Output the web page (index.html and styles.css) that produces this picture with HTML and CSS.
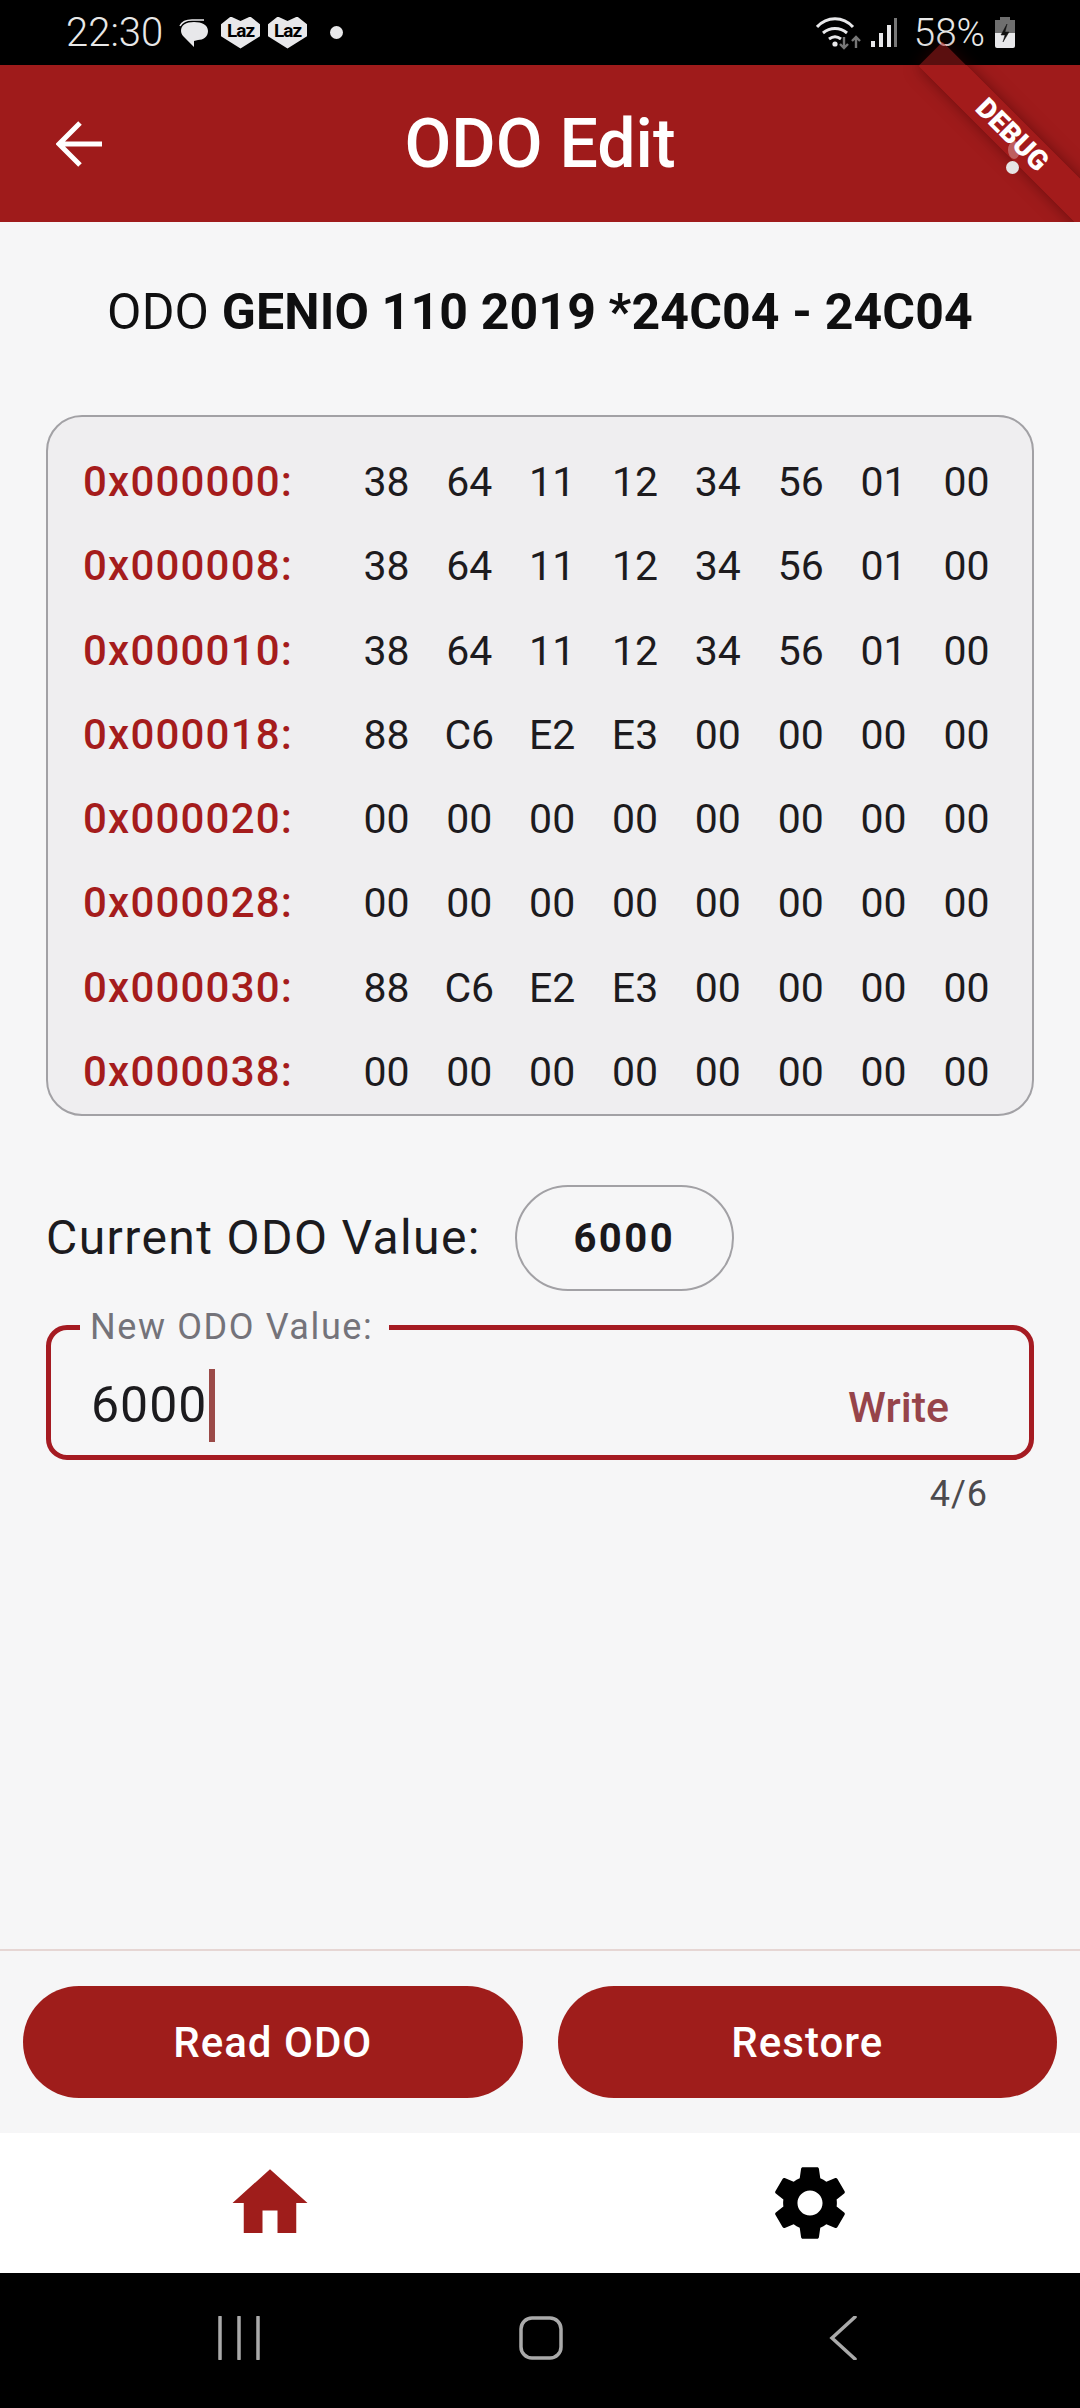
FILE: index.html
```html
<!DOCTYPE html>
<html lang="en">
<head>
<meta charset="utf-8">
<title>ODO Edit</title>
<link rel="stylesheet" href="styles.css">
</head>
<body>
<div class="page">
  <div class="status">
    <div class="status-left">
      <span class="clock">22:30</span>
      <svg class="ic-chat" viewBox="0 0 32 32"><path class="fg" d="M3 14c0-6 5-9 13-9s14 3 14 9-5 9-10 9l-4 1v6l-9-9c-2-2-4-4-4-7z"/><path class="st" d="M2 9c2-4 6-6 12-6h12"/></svg>
      <span class="laz">Laz</span>
      <span class="laz">Laz</span>
      <span class="dot"></span>
    </div>
    <div class="status-right">
      <svg class="ic-wifi" viewBox="0 0 46 34"><path class="wave" d="M1 11C11 0 27 0 37 11M7 17c7-6 17-6 24 0M13 23c4-3 8-3 12 0"/><circle class="fg" cx="19" cy="28" r="2.6"/><path class="arrows" d="M28 21v11M24 28l4 4 4-4M40 32V21M36 25l4-4 4 4"/></svg>
      <svg class="ic-signal" viewBox="0 0 28 32"><rect class="fg" x="1" y="24" width="4" height="6"/><rect class="fg" x="9" y="16" width="4" height="14"/><rect class="fg" x="17" y="8" width="4" height="22"/><rect class="dim" x="24" y="1" width="3" height="29"/></svg>
      <span class="pct">58%</span>
      <svg class="ic-batt" viewBox="0 0 22 32"><rect class="dim2" x="6" y="0" width="10" height="4"/><rect class="dim2" x="1" y="3" width="20" height="13"/><path class="fg" d="M1 16h20v13a2 2 0 0 1-2 2H3a2 2 0 0 1-2-2z"/><path class="bolt" d="M13 7l-6 11h4l-2 7 6-10h-4z"/></svg>
    </div>
  </div>

  <header class="appbar">
    <svg class="back" viewBox="0 0 48 48"><path d="M46 24H4M24 3 3 24l21 21"/></svg>
    <h1 class="appbar-title">ODO Edit</h1>
  </header>

  <main class="main">
    <h2 class="heading">ODO <b>GENIO 110 2019 *24C04 - 24C04</b></h2>

    <section class="dump">
      <div class="row"><span class="addr">0x000000:</span><span class="b">38</span><span class="b">64</span><span class="b">11</span><span class="b">12</span><span class="b">34</span><span class="b">56</span><span class="b">01</span><span class="b">00</span></div>
      <div class="row"><span class="addr">0x000008:</span><span class="b">38</span><span class="b">64</span><span class="b">11</span><span class="b">12</span><span class="b">34</span><span class="b">56</span><span class="b">01</span><span class="b">00</span></div>
      <div class="row"><span class="addr">0x000010:</span><span class="b">38</span><span class="b">64</span><span class="b">11</span><span class="b">12</span><span class="b">34</span><span class="b">56</span><span class="b">01</span><span class="b">00</span></div>
      <div class="row"><span class="addr">0x000018:</span><span class="b">88</span><span class="b">C6</span><span class="b">E2</span><span class="b">E3</span><span class="b">00</span><span class="b">00</span><span class="b">00</span><span class="b">00</span></div>
      <div class="row"><span class="addr">0x000020:</span><span class="b">00</span><span class="b">00</span><span class="b">00</span><span class="b">00</span><span class="b">00</span><span class="b">00</span><span class="b">00</span><span class="b">00</span></div>
      <div class="row"><span class="addr">0x000028:</span><span class="b">00</span><span class="b">00</span><span class="b">00</span><span class="b">00</span><span class="b">00</span><span class="b">00</span><span class="b">00</span><span class="b">00</span></div>
      <div class="row"><span class="addr">0x000030:</span><span class="b">88</span><span class="b">C6</span><span class="b">E2</span><span class="b">E3</span><span class="b">00</span><span class="b">00</span><span class="b">00</span><span class="b">00</span></div>
      <div class="row"><span class="addr">0x000038:</span><span class="b">00</span><span class="b">00</span><span class="b">00</span><span class="b">00</span><span class="b">00</span><span class="b">00</span><span class="b">00</span><span class="b">00</span></div>
    </section>

    <div class="current">
      <span class="current-label">Current ODO Value:</span>
      <span class="pill">6000</span>
    </div>

    <fieldset class="field">
      <legend class="field-label">New ODO Value:</legend>
      <div class="field-body">
        <span class="field-value">6000</span><span class="caret"></span>
        <span class="write">Write</span>
      </div>
    </fieldset>
    <div class="counter">4/6</div>
  </main>

  <div class="actions">
    <button class="btn">Read ODO</button>
    <button class="btn">Restore</button>
  </div>

  <nav class="tabs">
    <div class="tab">
      <svg class="home" viewBox="0 0 24 24"><path d="M10 20v-6h4v6h5v-8h3L12 3 2 12h3v8z"/></svg>
    </div>
    <div class="tab">
      <svg class="gear" viewBox="0 0 24 24"><path d="M19.43 12.98c.04-.32.07-.64.07-.98s-.03-.66-.07-.98l2.11-1.65c.19-.15.24-.42.12-.64l-2-3.46c-.12-.22-.39-.3-.61-.22l-2.49 1c-.52-.4-1.08-.73-1.69-.98l-.38-2.65C14.46 2.18 14.25 2 14 2h-4c-.25 0-.46.18-.49.42l-.38 2.65c-.61.25-1.17.59-1.69.98l-2.49-1c-.23-.09-.49 0-.61.22l-2 3.46c-.13.22-.07.49.12.64l2.11 1.65c-.04.32-.07.65-.07.98s.03.66.07.98l-2.11 1.65c-.19.15-.24.42-.12.64l2 3.46c.12.22.39.3.61.22l2.49-1c.52.4 1.08.73 1.69.98l.38 2.65c.03.24.24.42.49.42h4c.25 0 .46-.18.49-.42l.38-2.65c.61-.25 1.17-.59 1.69-.98l2.49 1c.23.09.49 0 .61-.22l2-3.46c.12-.22.07-.49-.12-.64l-2.11-1.65zM12 15.5c-1.93 0-3.5-1.57-3.5-3.5s1.57-3.5 3.5-3.5 3.5 1.57 3.5 3.5-1.57 3.5-3.5 3.5z"/></svg>
    </div>
  </nav>

  <div class="sysnav">
    <svg class="sys" viewBox="0 0 44 44"><path d="M3 1v42M22 1v42M41 1v42"/></svg>
    <svg class="sys" viewBox="0 0 44 44"><rect x="2" y="2" width="40" height="40" rx="11"/></svg>
    <svg class="sys" viewBox="0 0 44 44"><path d="M34 1 11 22l23 21"/></svg>
  </div>

  <div class="banner-clip">
    <div class="banner">DEBUG</div>
    <span class="touch"></span>
  </div>
</div>
</body>
</html>
```

FILE: styles.css
```css
* { box-sizing: border-box; }
html, body { margin: 0; padding: 0; }
body { font-family: Roboto, "Liberation Sans", sans-serif; background: #f6f6f7; color: #1d1b1e; }

.page { position: relative; width: 1080px; height: 2408px; overflow: hidden; display: flex; flex-direction: column; background: #f6f6f7; }

/* status bar */
.status { height: 65px; flex: none; background: #000; color: #e8e8e8; display: flex; justify-content: space-between; align-items: center; padding: 0 64px 0 66px; }
.status-left, .status-right { display: flex; align-items: center; }
.clock { font-size: 40px; font-weight: 300; line-height: 65px; width: 92px; white-space: nowrap; }
.ic-chat { width: 32px; height: 32px; margin-left: 20px; }
.fg { fill: #e8e8ea; }
.st { fill: none; stroke: #e8e8ea; stroke-width: 1.5; }
.laz { width: 39px; height: 32px; margin-left: 8px; background: #e8e8ea; color: #000; font-size: 19px; font-weight: 700; letter-spacing: -1px; line-height: 28px; text-align: center; clip-path: polygon(25% 0, 50% 14%, 75% 0, 100% 24%, 100% 62%, 50% 100%, 0 62%, 0 24%); }
.ic-chat + .laz { margin-left: 11px; }
.dot { width: 13px; height: 13px; border-radius: 50%; background: #e8e8ea; margin-left: 23px; }
.ic-wifi { width: 46px; height: 34px; }
.wave { fill: none; stroke: #e8e8ea; stroke-width: 3; }
.arrows { fill: none; stroke: #777; stroke-width: 2.4; }
.ic-signal { width: 28px; height: 32px; margin-left: 8px; }
.dim { fill: #777; }
.dim2 { fill: #6f6f6f; }
.pct { font-size: 38.5px; font-weight: 300; line-height: 65px; margin-left: 16px; }
.ic-batt { width: 22px; height: 32px; margin-left: 9px; }
.bolt { fill: #111; stroke: #111; stroke-width: .5; }

/* app bar */
.appbar { height: 157px; flex: none; background: #9f1b1b; color: #fff; display: flex; align-items: center; justify-content: center; position: relative; }
.back { position: absolute; left: 56px; top: 55px; width: 48px; height: 48px; fill: none; stroke: #fff; stroke-width: 5; }
.appbar-title { margin: 0; font-size: 68px; font-weight: 500; line-height: 80px; }

/* main */
.main { flex: 1; display: flex; flex-direction: column; padding: 0 46px; min-height: 0; border-bottom: 2px solid #e6d6d4; }
.heading { margin: 0; padding-top: 62px; font-size: 50px; font-weight: 400; line-height: 56px; letter-spacing: .15px; text-align: center; color: #0f0f10; white-space: nowrap; }
.heading b { font-weight: 700; }

.dump { margin-top: 75px; height: 701px; border: 2px solid #a2a1a5; border-radius: 36px; background: #efeef0; padding: 23px 0 0 35px; display: flex; flex-direction: column; }
.row { height: 84.5px; display: grid; grid-template-columns: 262px repeat(8, 82.86px); align-items: center; font-size: 41px; line-height: 48px; }
.addr { font-size: 42px; letter-spacing: 1.2px; font-weight: 500; color: #a51c1c; white-space: nowrap; }
.b { text-align: center; color: #1d1b1e; letter-spacing: 0; }

.current { display: flex; align-items: center; margin-top: 69px; }
.current-label { font-size: 48px; line-height: 106px; letter-spacing: 1.4px; color: #1c1b1e; }
.pill { width: 219px; height: 106px; margin-left: 34px; border: 2px solid #a2a1a5; border-radius: 53px; display: flex; align-items: center; justify-content: center; font-size: 40px; font-weight: 700; letter-spacing: 2.5px; color: #1a181b; }

.field { margin: 16px 0 0; padding: 0 0 0 40px; height: 153px; border: 5px solid #a51b22; border-radius: 21px; min-width: 0; }
.field-label { padding: 0 16px 0 10px; margin-left: -11px; font-size: 36px; line-height: 40px; letter-spacing: 1.6px; color: #74737a; }
.field-body { display: flex; align-items: center; height: 100px; margin-top: 8px; }
.field-value { font-size: 50px; letter-spacing: 1px; line-height: 60px; color: #1c1b1e; }
.caret { width: 6px; height: 73px; margin-left: 2px; background: #9b4a48; }
.write { margin: 4px 80px 0 auto; font-size: 43px; font-weight: 500; color: #96444a; }

.counter { margin-top: 12px; padding-right: 46px; text-align: right; font-size: 36px; line-height: 44px; letter-spacing: 1px; color: #4c4a4d; }

/* bottom */
.actions { height: 182px; flex: none; padding: 35px 23px; display: flex; gap: 35px; }
.btn { flex: 1; border: 0; border-radius: 56px; background: #9f1d1b; color: #fff; font-family: inherit; font-size: 42px; font-weight: 500; letter-spacing: 1px; }

.tabs { height: 140px; flex: none; background: #fff; display: grid; grid-template-columns: 1fr 1fr; }
.tab { display: flex; align-items: center; justify-content: center; }
.home { width: 90px; height: 90px; fill: #9f1d1b; }
.gear { width: 86px; height: 86px; fill: #000; }

.sysnav { height: 135px; flex: none; background: #000; display: flex; align-items: center; gap: 258px; padding: 0 0 5px 217px; }
.sys { width: 44px; height: 44px; fill: none; stroke: #aaa; stroke-width: 3.5; stroke-linecap: round; }

/* debug ribbon */
.banner-clip { position: absolute; top: 0; right: 0; width: 220px; height: 222px; overflow: hidden; pointer-events: none; }
.banner { position: absolute; left: 37px; top: 118px; width: 230px; height: 34px; transform: rotate(45deg); background: rgba(165, 27, 27, .55); box-shadow: 0 0 16px rgba(60, 0, 0, .55); color: #fff; font-size: 28px; font-weight: 900; line-height: 34px; text-align: center; }
.touch { position: absolute; left: 146px; top: 161px; width: 13px; height: 13px; border-radius: 50%; background: #e6e4e4; }
.touch::before { content: ""; position: absolute; left: 2px; top: -20px; width: 12px; height: 18px; border-radius: 50%; background: rgba(255, 255, 255, .3); }
```
